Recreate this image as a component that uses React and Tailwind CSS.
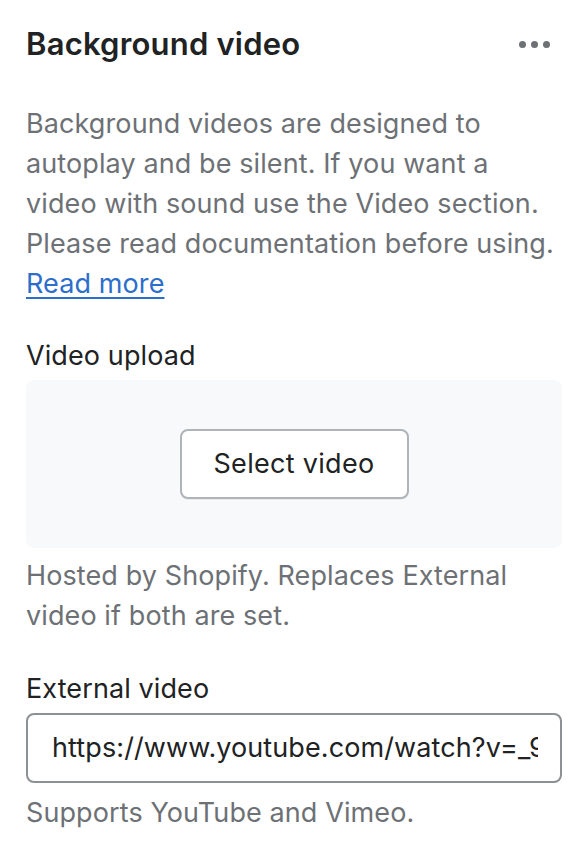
export default function App() {
  return (
    <div
      className="min-h-[860px] w-[588px] bg-white px-[26px] pt-[24px] text-[27px] leading-[40px] tracking-[0.1px] text-[#202223]"
      style={{ fontFamily: 'Inter, "Noto Sans", sans-serif' }}
    >
      <div className="flex h-[40px] items-center justify-between">
        <h2 className="text-[31px] font-semibold tracking-[0.2px]">Background video</h2>
        <button className="mr-[12px] flex items-center gap-[5px] text-[#6d7175]" aria-label="More options">
          <span className="block h-[7px] w-[7px] rounded-full bg-current" />
          <span className="block h-[7px] w-[7px] rounded-full bg-current" />
          <span className="block h-[7px] w-[7px] rounded-full bg-current" />
        </button>
      </div>

      <p className="mt-[40px] text-[#6d7175]">
        Background videos are designed to autoplay and be silent. If you want a video with sound use the Video section.
        Please read documentation before using.
        <span className="block">
          <a href="#" className="text-[#2c6ecb] underline underline-offset-[4px]">
            Read more
          </a>
        </span>
      </p>

      <div className="mt-[32px]">
        <label className="block">Video upload</label>
        <div className="mt-[4px] flex h-[168px] items-center justify-center rounded-[8px] bg-[#f8f9fb]">
          <button className="h-[70px] w-[229px] rounded-[8px] border-2 border-[#aeb4b9] bg-white tracking-[0.3px] text-[#202223] shadow-[0_1px_0_rgba(0,0,0,0.05)]">
            Select video
          </button>
        </div>
        <p className="mt-[8px] text-[#6d7175]">Hosted by Shopify. Replaces External video if both are set.</p>
      </div>

      <div className="mt-[33px]">
        <label className="block">External video</label>
        <div className="mt-[4px] flex h-[70px] items-center rounded-[8px] border-2 border-[#8c9196] pl-[24px] pr-[22px]">
          <span className="block min-w-0 overflow-hidden whitespace-nowrap">https://www.youtube.com/watch?v=_9VUPq3SxOc</span>
        </div>
        <p className="mt-[10px] text-[#6d7175]">Supports YouTube and Vimeo.</p>
      </div>
    </div>
  )
}
